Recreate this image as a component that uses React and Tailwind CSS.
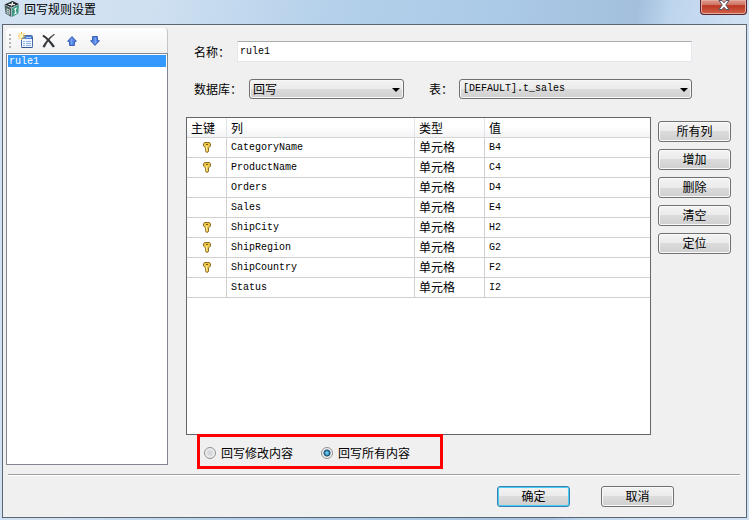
import React from "react";

const mono = "font-['Liberation_Mono','Noto_Sans_CJK_SC',monospace]";
const cjk = "font-['Noto_Sans_CJK_SC',sans-serif]";

const rows = [
  { key: true, name: "CategoryName", type: "单元格", value: "B4" },
  { key: true, name: "ProductName", type: "单元格", value: "C4" },
  { key: false, name: "Orders", type: "单元格", value: "D4" },
  { key: false, name: "Sales", type: "单元格", value: "E4" },
  { key: true, name: "ShipCity", type: "单元格", value: "H2" },
  { key: true, name: "ShipRegion", type: "单元格", value: "G2" },
  { key: true, name: "ShipCountry", type: "单元格", value: "F2" },
  { key: false, name: "Status", type: "单元格", value: "I2" },
];

function LogoIcon() {
  return (
    <svg width="16" height="18" viewBox="0 0 16 18" aria-hidden="true">
      <path d="M.5 4.500 8.500 1 15 4 7.500 7.500Z" fill="#25292a" />
      <path d="M4.500 4.300 11 4.600M8.700 2.200 7.300 6.200" stroke="#e8efee" strokeWidth="1.3" />
      <path d="M.5 5 7.300 8v9L1.600 13.600Z" fill="#4a5e5c" />
      <path d="M8 8 15 4.600 14.400 13.600 8 17Z" fill="#3f9a86" />
      <path d="M3 8.500v4.500M5.300 9.800v4.600M3 9l2.300 1M3 11.200l2.300 1M3 13.200l2.300 1" stroke="#dce6e4" strokeWidth=".8" />
      <path d="M11.400 8.400v5M10 9.400l3-1.500M10 14.200l3-1.500" stroke="#f3f8f7" strokeWidth="1" />
    </svg>
  );
}

function NewIcon() {
  return (
    <svg width="16" height="17" viewBox="0 0 16 17" aria-hidden="true">
      <rect x="3.5" y="3.5" width="11" height="12" rx="1" fill="#eef5ff" stroke="#4468a8" />
      <path d="M4 4h10v3H4z" fill="#4d7fd4" />
      <path d="M8 5.500h5" stroke="#a9c8f7" />
      <path d="M5 9.500h2M5 11.500h2M5 13.500h2M8 9.500h5M8 11.500h5M8 13.500h5" stroke="#8fb0e4" />
      <path d="M3.500 15.500h11" stroke="#35558f" />
      <path d="M3.500 0v8M0 4h7.500M.8 1.200l5.600 5.600M6.400 1.200.8 6.800" stroke="#eeb92a" strokeWidth="1" />
      <circle cx="3.500" cy="4" r="2" fill="#fffab8" />
    </svg>
  );
}

function DeleteIcon() {
  return (
    <svg width="14" height="14" viewBox="0 0 14 14" aria-hidden="true">
      <path d="M1.500.8C5 3 9.500 7.500 13 12.500L10.800 13.400C8 9 4 4.500.3 2.200Z" fill="#303338" />
      <path d="M12.500.5C8.500 3.500 5 8 2.500 13.300L.8 12.600C3 8 7.500 3 12 .2Z" fill="#303338" stroke="#303338" strokeWidth=".5" />
    </svg>
  );
}

function ArrowIcon({ down }) {
  return (
    <svg width="10" height="10" viewBox="0 0 10 10" className={down ? "rotate-180" : ""} aria-hidden="true">
      <path d="M5 .6 9.400 5.300H7.400v4.100H2.600V5.300H.6Z" fill="#5a8bea" stroke="#2f57b0" strokeWidth="1" strokeLinejoin="round" />
      <path d="M4.500 2.500v6" stroke="#7aa5f3" />
    </svg>
  );
}

function KeyIcon() {
  return (
    <svg width="8" height="11" viewBox="0 0 8 11" className="mx-auto block" role="img" aria-label="主键">
      <path d="M1.500.5h5L7.500 2v2L6 5.500 5.500 6v3.500L4 10.500 2.700 9.500V6L.5 4V2Z" fill="#edc746" stroke="#8b6b24" />
      <path d="M3 2.500h2" stroke="#74581c" />
      <path d="M3.700 4v5" stroke="#fff1a0" />
    </svg>
  );
}

function Button({ children, primary }) {
  return (
    <button
      type="button"
      className={`flex h-[21px] w-[73px] items-center justify-center rounded-[3px] border bg-[linear-gradient(#f3f3f3,#ebebeb_50%,#dcdcdc_50%,#cfcfcf)] pb-[2px] text-xs leading-4 text-black ${
        primary
          ? "border-[#3c7fb1] shadow-[inset_0_0_0_1px_#46cdf2]"
          : "border-[#707070] shadow-[inset_0_0_0_1px_#fafafa]"
      }`}
    >
      {children}
    </button>
  );
}

function Select({ id, value, className }) {
  return (
    <div className={`relative ${className}`}>
      <select
        id={id}
        defaultValue={value}
        className="block h-5 w-full appearance-none rounded-[3px] border border-[#707070] bg-[linear-gradient(#f2f2f2,#ebebeb_50%,#dcdcdc_50%,#cfcfcf)] pr-5 pl-[3px] text-black shadow-[inset_0_0_0_1px_#f8f8f8]"
      >
        <option>{value}</option>
      </select>
      <svg className="pointer-events-none absolute top-[9px] right-1" width="8" height="4" viewBox="0 0 8 4" aria-hidden="true">
        <path d="M0 0h8L4 4Z" fill="#000" />
      </svg>
    </div>
  );
}

function Radio({ label, checked }) {
  return (
    <label className="flex items-center gap-[5px] text-xs leading-4">
      <input
        type="radio"
        name="scope"
        defaultChecked={checked}
        className="size-3 appearance-none rounded-full border border-[#8e8f8f] bg-[radial-gradient(circle,#d5d8db_0_2px,#f4f4f4_5px)] checked:bg-[radial-gradient(circle_at_50%_50%,#62c6e8_0_1px,#174e7b_3px,#163a5a_3px,#f4f4f4_4px)]"
      />
      {label}
    </label>
  );
}

export default function App() {
  return (
    <div className={`flex min-h-screen flex-col bg-[linear-gradient(100deg,#d3e2f2,#cfe0f1_18%,#b4d0ea_40%,#abcae7_60%,#a3bfdc_76%,#bdd5ed_80%,#cfe0f2_88%)] px-[2px] pb-[2px] text-xs text-black ${cjk}`}>
      <header className="flex h-6 items-start justify-between">
        <div className="flex items-center gap-1 pl-[2px]">
          <LogoIcon />
          <h1 className="text-xs leading-[18px] font-normal">回写规则设置</h1>
        </div>
        <button type="button" aria-label="关闭" className="flex h-[15px] w-[47px] items-center justify-center rounded-b-[4px] border border-t-0 border-[#54232b] bg-[linear-gradient(#dc9c90,#cf7564_35%,#bb3723_40%,#d0634a)] pb-1 shadow-[inset_0_0_0_1px_#e6a99d]">
          <svg width="12" height="10" viewBox="0 0 12 10" aria-hidden="true">
            <path d="M1 .5h3l2 2.300L8 .5h3L7.800 5 11 9.500H8L6 7.200 4 9.500H1L4.200 5Z" fill="#fff" stroke="#535666" />
          </svg>
        </button>
      </header>

      <main className="flex grow flex-col border border-[#5b6673] bg-[#f0f0f0]">
        <div className="flex grow pr-[15px] pl-[3px]">
          <aside className="flex w-[162px] shrink-0 flex-col pt-[3px] pb-[9px]">
            <div className="flex h-[25px] items-center rounded-t border-r border-[#c5c5c5] bg-[linear-gradient(#fdfdfd,#f2f2f2)] pl-[3px]" role="toolbar">
              <div className="mr-[7px] flex flex-col gap-[2px]">
                <i className="size-[2px] bg-[#b5b5b5]" />
                <i className="size-[2px] bg-[#b5b5b5]" />
                <i className="size-[2px] bg-[#b5b5b5]" />
                <i className="size-[2px] bg-[#b5b5b5]" />
              </div>
              <button type="button" aria-label="新建" className="mr-2"><NewIcon /></button>
              <button type="button" aria-label="删除规则" className="mr-[11px]"><DeleteIcon /></button>
              <button type="button" aria-label="上移" className="mr-[13px]"><ArrowIcon /></button>
              <button type="button" aria-label="下移"><ArrowIcon down /></button>
            </div>
            <ul className={`grow border border-[#828790] bg-white p-px text-[10px] ${mono}`}>
              <li className="h-3 bg-[#3399ff] pl-px leading-[14px] text-white">rule1</li>
            </ul>
          </aside>

          <section className="ml-[18px] flex min-w-0 grow flex-col pt-4 pb-[5px]">
            <div className="flex items-center pr-[39px]">
              <label htmlFor="name" className="w-[51px] pl-2 whitespace-nowrap">名称：</label>
              <input id="name" defaultValue="rule1" className={`h-[21px] min-w-0 grow border border-[#e3e9ef] border-t-[#abadb3] bg-white px-[2px] pb-px text-[10px] ${mono}`} />
            </div>
            <div className="mt-[17px] flex items-center pr-[39px]">
              <label htmlFor="database" className="w-[63px] pl-2 whitespace-nowrap">数据库：</label>
              <Select id="database" value="回写" className="w-[155px]" />
              <label htmlFor="table" className="ml-[25px] w-[30px] whitespace-nowrap">表：</label>
              <Select id="table" value="[DEFAULT].t_sales" className={`grow text-[10px] ${mono}`} />
            </div>

            <div className="mt-[18px] flex grow gap-[7px]">
              <div className="grow border border-[#64666b] bg-white">
                <table className="w-full table-fixed border-separate border-spacing-0 text-left">
                  <colgroup>
                    <col className="w-10" />
                    <col className="w-[188px]" />
                    <col className="w-[70px]" />
                    <col />
                  </colgroup>
                  <thead>
                    <tr className="h-5 bg-[linear-gradient(#fff_40%,#f2f3f5)]">
                      {["主键", "列", "类型", "值"].map((h) => (
                        <th key={h} className="border-r border-b border-r-[#e2e4e8] border-b-[#d5d5d5] p-0 pl-1 leading-[18px] font-normal last:border-r-0">{h}</th>
                      ))}
                    </tr>
                  </thead>
                  <tbody>
                    {rows.map((r) => (
                      <tr key={r.name} className="h-5">
                        <td className="border-r border-b border-[#d0d0d0] p-0">{r.key && <KeyIcon />}</td>
                        <td className={`border-r border-b border-[#d0d0d0] p-0 pl-1 text-[10px] leading-[19px] ${mono}`}>{r.name}</td>
                        <td className="border-r border-b border-[#d0d0d0] p-0 pb-[2px] pl-1 leading-[17px]">{r.type}</td>
                        <td className={`border-b border-[#d0d0d0] p-0 pl-1 text-[10px] leading-[19px] ${mono}`}>{r.value}</td>
                      </tr>
                    ))}
                  </tbody>
                </table>
              </div>
              <div className="flex shrink-0 flex-col gap-[7px] pt-1">
                {["所有列", "增加", "删除", "清空", "定位"].map((b) => (
                  <Button key={b}>{b}</Button>
                ))}
              </div>
            </div>

            <fieldset className="-mt-px ml-[11px] flex h-[35px] w-[246px] gap-7 border-[3px] border-[#ff0000] pt-2 pl-1">
              <div className="h-4"><Radio label="回写修改内容" /></div>
              <div className="h-4"><Radio label="回写所有内容" checked /></div>
            </fieldset>
          </section>
        </div>

        <footer className="mr-[6px] ml-[5px] flex h-[43px] shrink-0 justify-end gap-[31px] border-t border-[#a0a0a0] pt-[11px] pr-[66px] shadow-[inset_0_1px_0_#fff]">
          <Button primary>确定</Button>
          <Button>取消</Button>
        </footer>
      </main>
    </div>
  );
}
